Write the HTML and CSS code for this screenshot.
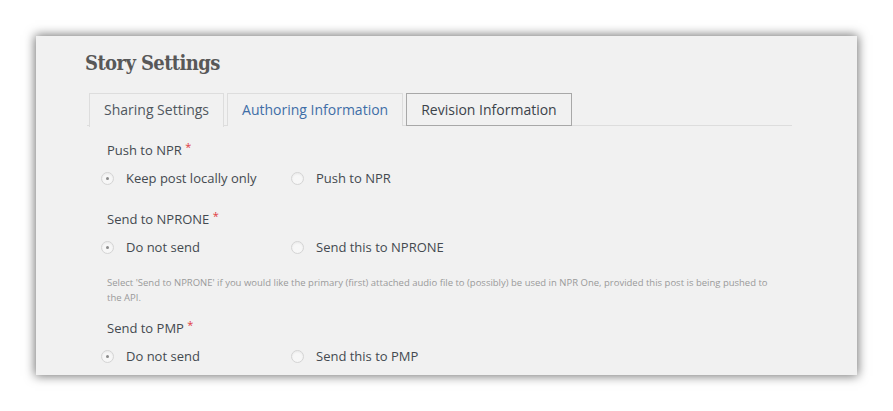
FILE: index.html
```html
<!DOCTYPE html>
<html>
<head>
<meta charset="utf-8">
<link rel="stylesheet" href="styles.css">
</head>
<body>
<div class="panel">
  <h2 class="title">Story Settings</h2>
  <div class="tabs">
    <div class="tab active">Sharing Settings</div>
    <div class="tab link">Authoring Information</div>
    <div class="tab focus">Revision Information</div>
  </div>
  <div class="content">
    <div class="field">
      <div class="label">Push to NPR <span class="req">*</span></div>
      <div class="options">
        <div class="opt"><span class="radio checked"></span>Keep post locally only</div>
        <div class="opt"><span class="radio"></span>Push to NPR</div>
      </div>
    </div>
    <div class="field with-help">
      <div class="label">Send to NPRONE <span class="req">*</span></div>
      <div class="options">
        <div class="opt"><span class="radio checked"></span>Do not send</div>
        <div class="opt"><span class="radio"></span>Send this to NPRONE</div>
      </div>
      <p class="help">Select 'Send to NPRONE' if you would like the primary (first) attached audio file to (possibly) be used in NPR One, provided this post is being pushed to the API.</p>
    </div>
    <div class="field">
      <div class="label">Send to PMP <span class="req">*</span></div>
      <div class="options">
        <div class="opt"><span class="radio checked"></span>Do not send</div>
        <div class="opt"><span class="radio"></span>Send this to PMP</div>
      </div>
    </div>
  </div>
</div>
</body>
</html>
```

FILE: styles.css
```css
html, body {
  margin: 0;
  padding: 0;
  background: #ffffff;
}
body {
  padding: 36px;
  font-family: "Open Sans", "Liberation Sans", sans-serif;
}
.panel {
  width: 821px;
  height: 339px;
  box-sizing: border-box;
  background: #f1f1f1;
  box-shadow: 0 0 10px 1px rgba(0, 0, 0, 0.55);
  overflow: hidden;
  padding: 13px 65px 0 51px;
}
.title {
  margin: 0 0 0 -2px;
  font-family: "DejaVu Serif Condensed", "DejaVu Serif", serif;
  font-weight: bold;
  font-size: 20px;
  line-height: 28px;
  color: #585858;
  letter-spacing: -0.6px;
}
.tabs {
  display: flex;
  gap: 3px;
  margin-top: 16px;
  padding-left: 2px;
  border-bottom: 1px solid #dddddd;
  height: 33px;
  box-sizing: border-box;
}
.tab {
  box-sizing: border-box;
  height: 33px;
  padding: 0 14px;
  border: 1px solid #dddddd;
  border-bottom: none;
  font-size: 14px;
  line-height: 31px;
  color: #555555;
  background: #f1f1f1;
}
.tab.active {
  height: 34px;
  padding: 0 14px;
  color: #50575e;
}
.tab.link {
  color: #3f6ea7;
}
.tab.focus {
  border-color: #a8a8a8;
  border-bottom: 1px solid #a8a8a8;
  color: #3c434a;
}
.content {
  padding-left: 20px;
  padding-top: 12px;
}
.field {
  margin-bottom: 20px;
}
.field.with-help {
  margin-bottom: 11px;
}
.label {
  font-size: 13px;
  line-height: 17px;
  color: #444a50;
}
.req {
  color: #e0393e;
  font-size: 11px;
  vertical-align: 4px;
}
.options {
  display: flex;
  margin-top: 10px;
  margin-left: -6px;
}
.opt {
  display: flex;
  align-items: center;
  width: 190px;
  font-size: 13px;
  line-height: 18px;
  color: #444a50;
}
.radio {
  width: 11px;
  height: 11px;
  border: 1px solid #d4d4d4;
  border-radius: 50%;
  background: #f7f7f7;
  margin-right: 12px;
  position: relative;
  box-shadow: inset 0 1px 2px rgba(0,0,0,0.06);
}
.radio.checked::after {
  content: "";
  position: absolute;
  left: 4px;
  top: 4px;
  width: 3px;
  height: 3px;
  border-radius: 50%;
  background: #8a8a8a;
}
.help {
  margin: 19px 0 0 0;
  font-size: 9.5px;
  line-height: 15px;
  color: #9a9a9a;
  max-width: 670px;
}
```
